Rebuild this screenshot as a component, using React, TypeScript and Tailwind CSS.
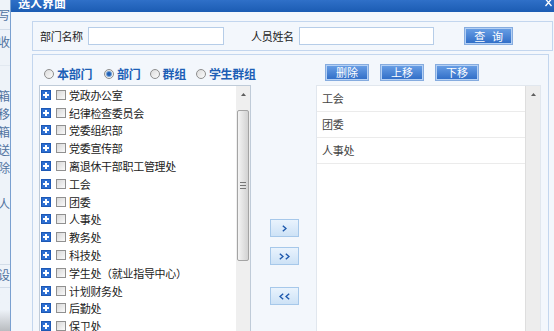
import React from 'react';

const treeItems = [
  '党政办公室',
  '纪律检查委员会',
  '党委组织部',
  '党委宣传部',
  '离退休干部职工管理处',
  '工会',
  '团委',
  '人事处',
  '教务处',
  '科技处',
  '学生处（就业指导中心）',
  '计划财务处',
  '后勤处',
  '保卫处',
];

const selectedItems = ['工会', '团委', '人事处'];

const radios = [
  { label: '本部门', checked: false, ml: 'ml-[5px]' },
  { label: '部门', checked: true, ml: 'ml-[12px]' },
  { label: '群组', checked: false, ml: 'ml-[9px]' },
  { label: '学生群组', checked: false, ml: 'ml-[10px]' },
];

function StripChar({ ch }: { ch: string }) {
  return (
    <div className="h-[18px] shrink-0 flex items-center">
      <span className="ml-[-2px] text-[12px] leading-[12px] text-[#50729f]">{ch}</span>
    </div>
  );
}

function SideStrip() {
  return (
    <div className="w-[10px] shrink-0 overflow-hidden flex flex-col bg-[#eef3f9] pt-[6px]">
      <StripChar ch="写" />
      <div className="h-[5px] shrink-0" />
      <div className="h-[1px] shrink-0 bg-[#d3dde9]" />
      <div className="h-[3px] shrink-0" />
      <StripChar ch="收" />
      <div className="h-[14px] shrink-0" />
      <div className="h-[1px] shrink-0 bg-[#e2e9f1]" />
      <div className="h-[21px] shrink-0" />
      <StripChar ch="箱" />
      <StripChar ch="移" />
      <StripChar ch="箱" />
      <StripChar ch="送" />
      <StripChar ch="除" />
      <div className="h-[18px] shrink-0" />
      <StripChar ch="人" />
      <div className="h-[51px] shrink-0" />
      <div className="h-[1px] shrink-0 bg-[#d3dde9]" />
      <div className="h-[1px] shrink-0" />
      <StripChar ch="设" />
      <div className="h-[3px] shrink-0" />
      <div className="h-[1px] shrink-0 bg-[#d3dde9]" />
      <div className="flex-1 bg-gradient-to-b from-[#eef3f9] via-[#eef3f9] to-[#b9bcc0]" />
    </div>
  );
}

function Radio({ checked }: { checked: boolean }) {
  return (
    <span className="w-[10px] h-[10px] rounded-full border border-[#8e8e8e] bg-gradient-to-br from-[#dcdcdc] to-[#fbfbfb] flex items-center justify-center">
      {checked && <span className="w-[4px] h-[4px] rounded-full bg-[#1f5fb5] shadow-[0_0_0_1px_#6f9fd8]" />}
    </span>
  );
}

function BlueButton({ children, w, h }: { children: React.ReactNode; w: string; h: string }) {
  return (
    <div
      className={`${w} ${h} shrink-0 border border-[#86acdf] shadow-[inset_0_0_0_1px_#b4d0f4] bg-gradient-to-b from-[#6aa0e6] to-[#2e6cc6] text-white text-[11px] leading-[11px] flex items-center justify-center`}
    >
      {children}
    </div>
  );
}

function PlusIcon() {
  return (
    <svg width="10" height="10" viewBox="0 0 10 10" className="shrink-0">
      <rect x="0.5" y="0.5" width="9" height="9" fill="#2d6fd2" stroke="#1d58b4" />
      <rect x="2" y="4" width="6" height="2" fill="#fff" />
      <rect x="4" y="2" width="2" height="6" fill="#fff" />
    </svg>
  );
}

function UpArrow() {
  return (
    <svg width="5" height="3" viewBox="0 0 5 3">
      <polygon points="0,3 2.5,0 5,3" fill="#5e5e5e" />
    </svg>
  );
}

function Chevron({ dir }: { dir: 'r' | 'l' }) {
  return (
    <svg width="5" height="7" viewBox="0 0 5 7">
      <polyline
        points={dir === 'r' ? '0.8,0.8 4,3.5 0.8,6.2' : '4.2,0.8 1,3.5 4.2,6.2'}
        fill="none"
        stroke="#1d58ad"
        strokeWidth="1.4"
      />
    </svg>
  );
}

function MoveButton({ children, mt }: { children: React.ReactNode; mt: string }) {
  return (
    <div
      className={`${mt} ml-[19px] w-[29px] h-[18px] border border-[#a6c8ea] bg-gradient-to-b from-[#e9f3fd] to-[#cde2f6] flex items-center justify-center gap-[1px]`}
    >
      {children}
    </div>
  );
}

export default function App() {
  return (
    <div className="w-[554px] h-[331px] overflow-hidden flex bg-[#f2f7fc] font-['Noto_Sans_CJK_SC','Liberation_Sans',sans-serif] text-[11px] text-[#222]">
      <SideStrip />
      <div className="flex-1 min-w-0 flex flex-col border-l border-[#7aa0d0]">
        {/* title bar */}
        <div className="h-[12px] shrink-0 overflow-hidden bg-gradient-to-b from-[#2f70c8] to-[#1b5cb3] flex justify-between items-start">
          <span className="ml-[7px] mt-[-3px] text-[12px] leading-[12px] font-bold text-white">选人界面</span>
          <svg width="8" height="7" viewBox="0 0 8 7" className="mr-[1px] shrink-0">
            <path d="M0.5 -1 L6.5 6 M6.5 -1 L0.5 6" stroke="#fff" strokeWidth="1.3" fill="none" />
          </svg>
        </div>

        <div className="flex-1 min-h-0 overflow-hidden bg-[#f3f7fc] pl-[21px] pt-[9px]">
          {/* search panel */}
          <div className="h-[30px] mr-[1px] border border-[#c3d6ee] bg-[#f3f7fc] flex items-center pl-[7px] tracking-[-0.3px]">
            <span className="w-[48px] shrink-0">部门名称</span>
            <div className="w-[136px] h-[18px] shrink-0 border border-[#b6cde8] bg-white" />
            <span className="ml-[27px] w-[48px] shrink-0">人员姓名</span>
            <div className="w-[135px] h-[18px] shrink-0 border border-[#b6cde8] bg-white" />
            <div className="ml-[30px]">
              <BlueButton w="w-[49px]" h="h-[18px]">
                <span>查</span>
                <span className="ml-[7px]">询</span>
              </BlueButton>
            </div>
          </div>

          {/* main panel */}
          <div className="mt-[3px] w-[517px] h-[300px] border border-[#c3d6ee] bg-[#f3f7fc] pl-[6px] flex flex-col">
            <div className="h-[30px] shrink-0 flex">
              <div className="w-[277px] shrink-0">
                <div className="mt-[13px] h-[12px] flex items-center">
                  {radios.map((r) => (
                    <div key={r.label} className={`${r.ml} flex items-center`}>
                      <Radio checked={r.checked} />
                      <span className="ml-[3px] text-[12px] leading-[12px] font-bold text-[#1d5fb6] tracking-[-0.3px]">
                        {r.label}
                      </span>
                    </div>
                  ))}
                </div>
              </div>
              <div className="mt-[9px] pl-[9px] flex gap-[11px]">
                <BlueButton w="w-[44px]" h="h-[17px]">删除</BlueButton>
                <BlueButton w="w-[44px]" h="h-[17px]">上移</BlueButton>
                <BlueButton w="w-[44px]" h="h-[17px]">下移</BlueButton>
              </div>
            </div>

            <div className="flex-1 min-h-0 flex">
              {/* tree */}
              <div className="w-[212px] shrink-0 border border-[#bfcbd8] bg-white flex">
                <div className="flex-1 min-w-0 flex flex-col pl-[1px] tracking-[-0.3px]">
                  {treeItems.map((item) => (
                    <div key={item} className="h-[17.8px] shrink-0 flex items-center">
                      <PlusIcon />
                      <span className="ml-[5px] w-[10px] h-[10px] shrink-0 border border-[#909090] bg-gradient-to-br from-[#d8d8d8] to-[#fafafa]" />
                      <span className="ml-[3px] whitespace-nowrap leading-[12px]">{item}</span>
                    </div>
                  ))}
                </div>
                <div className="w-[14px] shrink-0 bg-[#efefef] flex flex-col">
                  <div className="h-[16px] shrink-0 flex items-center justify-center">
                    <UpArrow />
                  </div>
                  <div className="mt-[8px] ml-[1px] w-[12px] h-[151px] shrink-0 rounded-[2px] border border-[#a4a4a4] bg-gradient-to-r from-[#f4f4f4] to-[#d2d2d2] flex flex-col items-center justify-center gap-[2px]">
                    <span className="w-[6px] h-[1px] bg-[#777]" />
                    <span className="w-[6px] h-[1px] bg-[#777]" />
                    <span className="w-[6px] h-[1px] bg-[#777]" />
                  </div>
                </div>
              </div>

              {/* move buttons */}
              <div className="w-[65px] shrink-0 flex flex-col">
                <MoveButton mt="mt-[134px]">
                  <Chevron dir="r" />
                </MoveButton>
                <MoveButton mt="mt-[10px]">
                  <Chevron dir="r" />
                  <Chevron dir="r" />
                </MoveButton>
                <MoveButton mt="mt-[22px]">
                  <Chevron dir="l" />
                  <Chevron dir="l" />
                </MoveButton>
              </div>

              {/* selected list */}
              <div className="w-[225px] shrink-0 border border-[#e1e7ee] bg-white flex">
                <div className="flex-1 min-w-0 flex flex-col">
                  {selectedItems.map((item) => (
                    <div
                      key={item}
                      className="h-[26px] shrink-0 border-b border-[#ebebeb] flex items-center pl-[5px] text-[#444] tracking-[-0.3px]"
                    >
                      {item}
                    </div>
                  ))}
                </div>
                <div className="w-[15px] shrink-0 border-l border-[#dedede] bg-[#ededed] flex flex-col">
                  <div className="h-[16px] shrink-0 flex items-center justify-center">
                    <UpArrow />
                  </div>
                </div>
              </div>
            </div>
          </div>
        </div>
      </div>
    </div>
  );
}
